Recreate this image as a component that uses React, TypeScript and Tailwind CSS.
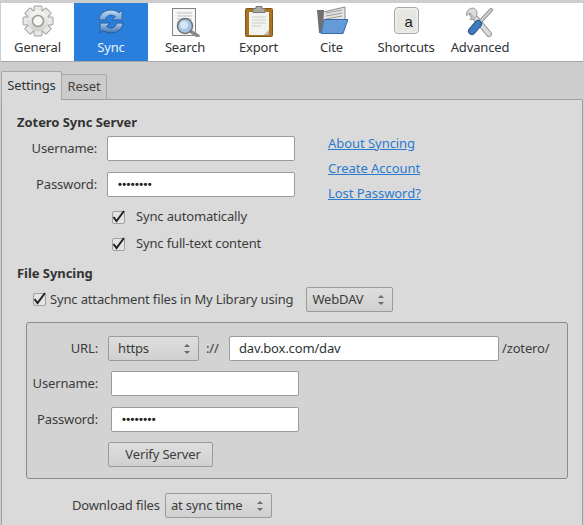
import type { ReactNode } from "react";

function GearIcon() {
  const teeth = [0, 45, 90, 135, 180, 225, 270, 315];
  return (
    <svg width="32" height="32" viewBox="0 0 32 32">
      <defs>
        <linearGradient id="gear" x1="0" y1="0" x2="0" y2="1">
          <stop offset="0" stopColor="#f6f6f4" />
          <stop offset="1" stopColor="#cfcfcc" />
        </linearGradient>
      </defs>
      {teeth.map((a) => (
        <rect key={a} x="12" y="1" width="8" height="9" rx="1" fill="#e8e8e6" stroke="#a0a09e" transform={`rotate(${a} 16 16)`} />
      ))}
      <circle cx="16" cy="16" r="10.500" fill="url(#gear)" />
      <circle cx="16" cy="16" r="5.500" fill="#f8f8f6" stroke="#9a9a98" strokeWidth="1.500" />
    </svg>
  );
}

function SyncIcon() {
  return (
    <svg width="32" height="32" viewBox="0 0 32 32">
      <defs>
        <linearGradient id="syncTop" x1="0" y1="0" x2="0" y2="1">
          <stop offset="0" stopColor="#c6dcf2" />
          <stop offset="1" stopColor="#6f9fd6" />
        </linearGradient>
        <linearGradient id="syncBottom" x1="0" y1="0" x2="0" y2="1">
          <stop offset="0" stopColor="#a9c8ea" />
          <stop offset="1" stopColor="#3f74b4" />
        </linearGradient>
      </defs>
      <path d="M4 15C4 9 10 5 16 5c3 0 6 1 8 3l3-3v10H17l3.500-3.500C19 10.500 18 10 16 10c-3 0-5 2-5.500 5z" fill="url(#syncTop)" stroke="#2f66a8" />
      <path d="M28 18c0 6-6 10-12 10-3 0-6-1-8-3l-3 3V18h10l-3.500 3.500C13 22.500 14 23 16 23c3 0 5-2 5.500-5z" fill="url(#syncBottom)" stroke="#255a9c" />
    </svg>
  );
}

function SearchDocIcon() {
  return (
    <svg width="32" height="32" viewBox="0 0 32 32">
      <rect x="3.500" y="3.500" width="23" height="27" fill="#f6f6f4" stroke="#85857f" />
      <path d="M8 8h15M8 11h15M8 14h15M8 17h4M8 20h3M8 23h3" stroke="#bcbfc3" />
      <path d="M21 26l8 5" stroke="#8a8a8a" strokeWidth="3.500" strokeLinecap="round" />
      <circle cx="16" cy="21" r="7.500" fill="#a5c4e6" stroke="#6f7275" strokeWidth="1.500" />
      <circle cx="15" cy="20" r="4" fill="#d6e5f5" />
    </svg>
  );
}

function ClipboardIcon() {
  return (
    <svg width="32" height="32" viewBox="0 0 32 32">
      <rect x="2.500" y="3.500" width="27" height="28" rx="1" fill="#ac731f" stroke="#82561a" />
      <path d="M6 7h20v21l-4 2H6z" fill="#f2f2f0" />
      <path d="M9 12h14M9 15h14M9 18h14M9 21h9" stroke="#cdcdcb" />
      <path d="M21 30l5-5v5z" fill="#b5b5b3" />
      <path d="M13 1.500h6v2h3v4H10v-4h3z" fill="#a8a89e" stroke="#7a7a72" />
    </svg>
  );
}

function FolderIcon() {
  return (
    <svg width="32" height="32" viewBox="0 0 32 32">
      <path d="M7 7l22-5v14H7z" fill="#e4e4e2" stroke="#8d8d8b" />
      <path d="M1 5h7l-2 23H3z" fill="#6f6f6d" />
      <path d="M10 8l16-3M10 11l16-3M10 14l16-3" stroke="#9b9b99" />
      <path d="M8 14.500h24l-5 14H5z" fill="#659ad8" stroke="#3b6aa8" />
    </svg>
  );
}

function KeyIcon() {
  return (
    <div className="flex h-[27px] w-[25px] items-center justify-center rounded-[4px] border border-[#a8a8a2] bg-[#e6e6e1] pl-[5px] pt-px font-['Liberation_Sans',sans-serif] text-[15px] leading-none text-[#1c1c1c] shadow-[inset_0_0_3px_#fff]">
      a
    </div>
  );
}

function ToolsIcon() {
  return (
    <svg width="32" height="32" viewBox="0 0 32 32">
      <path d="M8 9l17 20" stroke="#9a9a98" strokeWidth="6" strokeLinecap="round" />
      <path d="M8 9l17 20" stroke="#dcdcda" strokeWidth="4" strokeLinecap="round" />
      <path d="M9 3a6.500 6.500 0 0 0-6.500 7.500L6 8l3 3.500-3 3a6.500 6.500 0 0 0 7-7.500C12.500 5 11 3.500 9 3z" fill="#dcdcda" stroke="#9a9a98" />
      <path d="M27 5L15 18" stroke="#8a8a88" strokeWidth="4" strokeLinecap="round" />
      <path d="M27 5L15 18" stroke="#cfcfcd" strokeWidth="2" strokeLinecap="round" />
      <path d="M14 19L8 26" stroke="#2b5288" strokeWidth="8" strokeLinecap="round" />
      <path d="M14 19L8 26" stroke="#4079bc" strokeWidth="6" strokeLinecap="round" />
    </svg>
  );
}

function ToolbarItem({ label, icon, active, width }: { label: string; icon: ReactNode; active?: boolean; width: string }) {
  return (
    <div className={`flex h-full flex-col items-center ${width} ${active ? "bg-[#2a7fdc] text-[#e8f2fc]" : "text-[#2e3436]"}`}>
      <div className="flex h-[34px] items-center justify-center pt-[1px]">{icon}</div>
      <span className="mt-px text-[13px] leading-[18px]">{label}</span>
    </div>
  );
}

function TextBox({ value, width, secret }: { value?: string; width: string; secret?: boolean }) {
  return (
    <div className={`flex h-[25px] items-center rounded-[2px] border border-[#9b9b9b] bg-white pl-[10px] text-[#2e3436] ${width}`}>
      {secret ? <span className="font-['Liberation_Sans',sans-serif] text-[11px] font-bold tracking-[0.4px] text-[#222]">••••••••</span> : <span className="-ml-px">{value}</span>}
    </div>
  );
}

function Dropdown({ value, width, padding }: { value: string; width: string; padding: string }) {
  return (
    <div className={`flex h-[25px] items-center justify-between rounded-[2px] border border-[#9a9a9a] bg-gradient-to-b from-[#dedede] to-[#d0d0d0] pr-[8px] text-[#3c3c3c] ${padding} ${width}`}>
      <span>{value}</span>
      <span className="flex flex-col gap-[4px]">
        <span className="h-0 w-0 border-x-[3px] border-b-[3px] border-x-transparent border-b-[#6a6a6a]" />
        <span className="h-0 w-0 border-x-[3px] border-t-[3px] border-x-transparent border-t-[#6a6a6a]" />
      </span>
    </div>
  );
}

function CheckMark() {
  return (
    <span className="flex h-[13px] w-[13px] shrink-0 items-center justify-center rounded-[2px] border border-[#a0a0a0] bg-[#e4e4e4]">
      <svg width="13" height="13" viewBox="0 0 13 13" className="overflow-visible">
        <path d="M1.500 6l3 4L12 0" fill="none" stroke="#222" strokeWidth="2" />
      </svg>
    </span>
  );
}

export default function App() {
  return (
    <div className="h-[525px] w-[584px] overflow-hidden bg-[#cdcdcd] pt-[3px] font-['Noto_Sans','Open_Sans',sans-serif] text-[13px] tracking-[-0.15px] text-[#3c3c3c]">
      {/* Toolbar */}
      <div className="mx-px flex h-[59px] border-b border-[#a8a8a8] bg-white">
        <ToolbarItem label="General" icon={<GearIcon />} width="w-[73px]" />
        <ToolbarItem label="Sync" icon={<SyncIcon />} active width="w-[74px]" />
        <ToolbarItem label="Search" icon={<SearchDocIcon />} width="w-[74px]" />
        <ToolbarItem label="Export" icon={<ClipboardIcon />} width="w-[73px]" />
        <ToolbarItem label="Cite" icon={<FolderIcon />} width="w-[73px]" />
        <ToolbarItem label="Shortcuts" icon={<KeyIcon />} width="w-[76px]" />
        <ToolbarItem label="Advanced" icon={<ToolsIcon />} width="w-[72px]" />
      </div>

      {/* Tabs */}
      <div className="mt-[9px] flex h-[28px] items-end pl-px">
        <div className="relative z-10 -mb-px flex h-[29px] w-[61px] items-center justify-center rounded-t-[2px] border border-b-0 border-[#a8a8a8] bg-[#dadada] text-[#2e3436]">
          Settings
        </div>
        <div className="flex h-[25px] w-[45px] items-center justify-center rounded-tr-[2px] border border-b-0 border-l-0 border-[#a8a8a8] bg-[#cbcbcb] text-[#4a3f3a]">
          Reset
        </div>
      </div>

      {/* Panel */}
      <div className="mx-px h-[428px] rounded-t-[2px] border border-b-0 border-[#a0a0a0] bg-[#dadada] pl-[15px]">
        <h2 className="mt-[13px] text-[13px] font-bold leading-[18px] tracking-[-0.05px] text-[#333]">Zotero Sync Server</h2>

        <div className="flex">
          <div className="flex flex-col">
            <div className="mt-[5px] flex items-center">
              <span className="w-[80px] text-right">Username:</span>
              <span className="ml-[10px]"><TextBox width="w-[188px]" /></span>
            </div>
            <div className="mt-[11px] flex items-center">
              <span className="w-[80px] text-right">Password:</span>
              <span className="ml-[10px]"><TextBox width="w-[188px]" secret /></span>
            </div>
            <label className="ml-[95px] mt-[12px] flex h-[16px] items-center gap-[11px]">
              <CheckMark />
              Sync automatically
            </label>
            <label className="ml-[95px] mt-[11px] flex h-[16px] items-center gap-[11px]">
              <CheckMark />
              Sync full-text content
            </label>
          </div>
          <div className="ml-[33px] mt-[3px] flex flex-col gap-[7px] leading-[18px] tracking-[-0.05px] text-[#2a7ad0] underline">
            <a>About Syncing</a>
            <a>Create Account</a>
            <a>Lost Password?</a>
          </div>
        </div>

        <h2 className="mt-[12px] text-[13px] font-bold leading-[18px] tracking-[-0.05px] text-[#333]">File Syncing</h2>

        <div className="mt-[5px] flex items-center pl-[16px]">
          <CheckMark />
          <span className="ml-[4px] mt-px">Sync attachment files in My Library using</span>
          <span className="ml-[13px]"><Dropdown value="WebDAV" width="w-[87px]" padding="pl-[5px]" /></span>
        </div>

        {/* WebDAV group */}
        <div className="ml-[9px] mt-[10px] h-[157px] w-[542px] rounded-[3px] border border-[#8c8c8c] bg-[#d3d3d3] pt-[13px]">
          <div className="flex items-center">
            <span className="w-[71px] text-right">URL:</span>
            <span className="ml-[10px]"><Dropdown value="https" width="w-[91px]" padding="pl-[9px]" /></span>
            <span className="ml-[7px] w-[23px]">://</span>
            <TextBox value="dav.box.com/dav" width="w-[270px]" />
            <span className="ml-[3px]">/zotero/</span>
          </div>
          <div className="mt-[10px] flex items-center">
            <span className="w-[71px] text-right">Username:</span>
            <span className="ml-[13px]"><TextBox width="w-[188px]" /></span>
          </div>
          <div className="mt-[11px] flex items-center">
            <span className="w-[71px] text-right">Password:</span>
            <span className="ml-[13px]"><TextBox width="w-[188px]" secret /></span>
          </div>
          <div className="ml-[81px] mt-[10px] flex h-[25px] w-[105px] items-center justify-center rounded-[2px] border border-[#9a9a9a] bg-gradient-to-b from-[#dedede] to-[#d0d0d0] pl-[5px]">
            Verify Server
          </div>
        </div>

        <div className="mt-[14px] flex items-center pl-[55px]">
          <span>Download files</span>
          <span className="ml-[5px]"><Dropdown value="at sync time" width="w-[107px]" padding="pl-[5px]" /></span>
        </div>
      </div>
    </div>
  );
}
